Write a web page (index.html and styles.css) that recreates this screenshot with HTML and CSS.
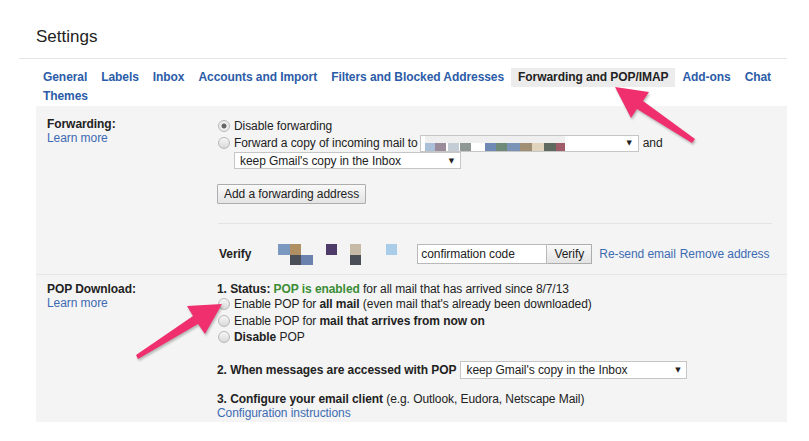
FILE: index.html
```html
<!DOCTYPE html>
<html lang="en">
<head>
    <meta charset="UTF-8">
    <meta name="viewport" content="width=device-width, initial-scale=1.0">
    <title>Settings</title>
    <link rel="stylesheet" href="styles.css">
</head>
<body>
    <div class="page">
        <div class="header">
            <h1 class="title">Settings</h1>
        </div>

        <div class="tabs">
            <a class="tab" href="#">General</a>
            <a class="tab" href="#">Labels</a>
            <a class="tab" href="#">Inbox</a>
            <a class="tab" href="#">Accounts and Import</a>
            <a class="tab" href="#">Filters and Blocked Addresses</a>
            <a class="tab active" href="#">Forwarding and POP/IMAP</a>
            <a class="tab" href="#">Add-ons</a>
            <a class="tab" href="#">Chat</a>
            <a class="tab" href="#">Themes</a>
        </div>

        <div class="panel">
            <!-- forwarding -->
            <div class="section">
                <div class="label-col">
                    <div class="label">Forwarding:</div>
                    <a class="link" href="#">Learn more</a>
                </div>
                <div class="options">
                    <div class="radio-line">
                        <span class="radio checked"></span>Disable forwarding
                    </div>
                    <div class="radio-line tall">
                        <span class="radio"></span>Forward a copy of incoming mail to
                        <span class="select fwd-select">
                            <svg class="blur-email" width="140" height="15" viewBox="0 0 140 15">
                                <rect x="0" y="0" width="140" height="7" fill="#efefef"/>
                                <rect x="0" y="7" width="10" height="8" fill="#a9c0d8"/>
                                <rect x="10" y="7" width="11" height="8" fill="#9c8b9b"/>
                                <rect x="23" y="7" width="11" height="8" fill="#c4ccd6"/>
                                <rect x="35" y="7" width="11" height="8" fill="#8f9795"/>
                                <rect x="60" y="7" width="11" height="8" fill="#6f89b5"/>
                                <rect x="71" y="7" width="11" height="8" fill="#6f8a78"/>
                                <rect x="82" y="7" width="13" height="8" fill="#7c93b8"/>
                                <rect x="95" y="7" width="12" height="8" fill="#a08f72"/>
                                <rect x="107" y="7" width="12" height="8" fill="#e0d4bc"/>
                                <rect x="119" y="7" width="12" height="8" fill="#5f6a60"/>
                                <rect x="131" y="7" width="9" height="8" fill="#a15c6a"/>
                            </svg>
                            <span class="caret">&#9660;</span>
                        </span>
                        <span class="and">and</span>
                    </div>
                    <div class="sub-line">
                        <span class="select keep-select">keep Gmail's copy in the Inbox<span class="caret">&#9660;</span></span>
                    </div>
                    <button class="button add-button">Add a forwarding address</button>
                    <div class="divider"></div>
                    <div class="verify-row">
                        <span class="label">Verify</span>
                        <svg class="blur-verify" width="120" height="22" viewBox="0 0 120 22">
                            <rect x="0" y="1" width="12" height="11" fill="#7b98c0"/>
                            <rect x="12" y="1" width="11" height="11" fill="#b08f63"/>
                            <rect x="12" y="12" width="11" height="10" fill="#4b4f57"/>
                            <rect x="23" y="12" width="12" height="10" fill="#6c82ae"/>
                            <rect x="48" y="1" width="11" height="11" fill="#4f3b69"/>
                            <rect x="72" y="1" width="11" height="11" fill="#c6b9a6"/>
                            <rect x="72" y="12" width="11" height="10" fill="#4a4f57"/>
                            <rect x="108" y="1" width="11" height="11" fill="#a9cde9"/>
                        </svg>
                        <input class="code-input" type="text" value="confirmation code">
                        <button class="button verify-button">Verify</button>
                        <a class="link resend" href="#">Re-send email</a>
                        <a class="link" href="#">Remove address</a>
                    </div>
                </div>
            </div>

            <!-- pop download -->
            <div class="section last">
                <div class="label-col pop">
                    <div class="label">POP Download:</div>
                    <a class="link" href="#">Learn more</a>
                </div>
                <div class="options pop">
                    <div class="status-line">
                        <b>1. Status: <span class="enabled">POP is enabled</span></b> for all mail that has arrived since 8/7/13
                    </div>
                    <div class="radio-line short">
                        <span class="radio"></span>Enable POP for&nbsp;<b>all mail</b>&nbsp;(even mail that's already been downloaded)
                    </div>
                    <div class="radio-line short">
                        <span class="radio"></span>Enable POP for&nbsp;<b>mail that arrives from now on</b>
                    </div>
                    <div class="radio-line short">
                        <span class="radio"></span><b>Disable</b>&nbsp;POP
                    </div>
                    <div class="when-row">
                        <b>2. When messages are accessed with POP</b>
                        <span class="select pop-select">keep Gmail's copy in the Inbox<span class="caret">&#9660;</span></span>
                    </div>
                    <div class="configure">
                        <b>3. Configure your email client</b> (e.g. Outlook, Eudora, Netscape Mail)
                    </div>
                    <a class="link config" href="#">Configuration instructions</a>
                </div>
            </div>
        </div>

        <svg class="arrows" width="809" height="441" viewBox="0 0 809 441">
            <polygon points="615,87 649,92 643,101 695,139 692,143 637,109 631,118" />
            <polygon points="222,304 205,334 198,324 138,359 136,355 193,316 187,306" />
        </svg>
    </div>
</body>
</html>
```

FILE: styles.css
```css
body {
    margin: 0;
    font-family: "Liberation Sans", Arial, sans-serif;
    font-size: 12px;
    letter-spacing: -0.07px;
    color: #222;
    background: #fff;
}

.page {
    position: relative;
    width: 809px;
    height: 441px;
    overflow: hidden;
}

/* header */
.header {
    margin-left: 19px;
    width: 768px;
    padding: 27px 0 11px 17px;
    box-sizing: border-box;
    border-bottom: 1px solid #e5e5e5;
}
.title {
    margin: 0;
    font-size: 17px;
    font-weight: normal;
    line-height: 20px;
    letter-spacing: 0;
    color: #222;
}

/* tabs */
.tabs {
    display: flex;
    flex-wrap: wrap;
    width: 751px;
    margin: 9px 0 0 36px;
}
.tab {
    padding: 0 7px;
    line-height: 19px;
    font-weight: bold;
    color: #2b5ca8;
    text-decoration: none;
}
.tab.active {
    background: #ececec;
    color: #222;
}

/* panel */
.panel {
    margin-left: 36px;
    width: 751px;
    background: #f4f4f4;
}
.section {
    display: flex;
    border-bottom: 1px solid #e6e6e6;
}
.section.last {
    border-bottom: none;
}
.label-col {
    width: 170px;
    padding: 11px 0 0 11px;
    line-height: 14px;
}
.label-col.pop {
    padding-top: 7px;
}
.label {
    font-weight: bold;
}
.link {
    color: #3d6bb3;
    text-decoration: none;
}
.options {
    flex: 1;
    padding: 11px 15px 10px 0;
}
.options.pop {
    padding: 7px 15px 2px 0;
}

/* radios */
.radio-line {
    display: flex;
    align-items: center;
    height: 17px;
    white-space: nowrap;
}
.radio-line.tall {
    height: 18px;
}
.radio-line.short {
    height: 16.5px;
}
.radio {
    width: 12px;
    height: 12px;
    margin: 0 4px 0 1px;
    box-sizing: border-box;
    border: 1px solid #b8b8b8;
    border-radius: 50%;
    background: linear-gradient(#f7f7f7, #d9d9d9);
}
.radio.checked {
    background: radial-gradient(circle, #666 0 2.2px, #ececec 2.8px);
}

/* fake selects */
.select {
    display: inline-flex;
    align-items: center;
    justify-content: space-between;
    box-sizing: border-box;
    height: 17px;
    padding: 0 6px 0 5px;
    border: 1px solid #c6c6c6;
    background: #fff;
    white-space: nowrap;
}
.caret {
    font-family: "DejaVu Sans", sans-serif;
    font-size: 7px;
    color: #222;
}
.fwd-select {
    width: 219px;
    margin-left: 2px;
    padding-left: 4px;
}
.blur-email {
    display: block;
}
.and {
    margin-left: 4px;
}
.sub-line {
    height: 17px;
    padding-left: 17px;
}
.keep-select {
    width: 227px;
}

/* buttons */
.button {
    font-family: inherit;
    font-size: 12px;
    letter-spacing: inherit;
    color: #222;
    height: 20px;
    padding: 0 6px;
    border: 1px solid #adadad;
    border-radius: 1px;
    background: linear-gradient(#f9f9f9, #e4e4e4);
}
.add-button {
    display: block;
    margin-top: 15px;
}

.divider {
    margin-top: 19px;
    margin-left: 1px;
    border-top: 1px solid #e3e3e3;
}

/* verify row */
.verify-row {
    display: flex;
    align-items: center;
    height: 20px;
    margin-top: 20px;
    padding-left: 2px;
    white-space: nowrap;
}
.blur-verify {
    margin-left: 27px;
}
.code-input {
    width: 130px;
    height: 20px;
    box-sizing: border-box;
    margin-left: 19px;
    padding: 0 3px;
    border: 1px solid #b9b9b9;
    font-family: inherit;
    font-size: 12px;
    letter-spacing: inherit;
    color: #222;
    background: #fff;
}
.verify-button {
    width: 45px;
    padding: 0;
    border-left: none;
}
.resend {
    margin: 0 4px 0 7px;
}

/* pop */
.status-line {
    line-height: 14px;
    white-space: nowrap;
}
.enabled {
    color: #3b8d36;
}
.when-row {
    display: flex;
    align-items: center;
    height: 18px;
    margin-top: 15.5px;
}
.pop-select {
    width: 227px;
    height: 18px;
    margin-left: 4px;
}
.configure {
    margin-top: 13px;
    line-height: 14px;
}
.config {
    display: block;
    line-height: 14px;
}

/* annotation arrows */
.arrows {
    position: absolute;
    top: 0;
    left: 0;
    pointer-events: none;
    fill: #ef2f6e;
    filter: drop-shadow(1px 2px 1px rgba(0, 0, 0, 0.25));
}
```
